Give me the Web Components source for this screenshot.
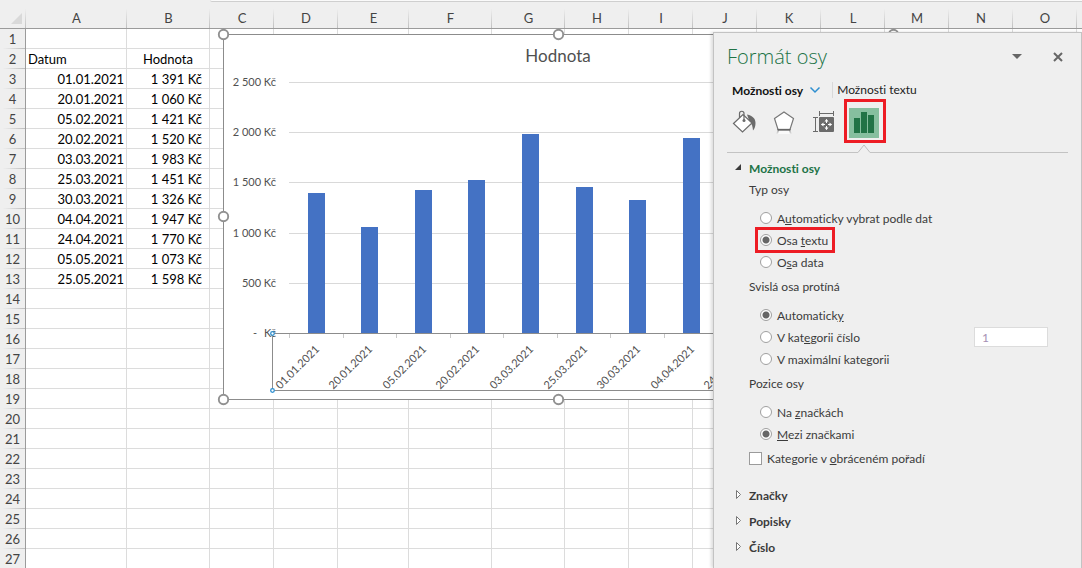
<!DOCTYPE html>
<html lang="cs">
<head>
<meta charset="utf-8">
<title>Formát osy</title>
<style>
html, body { height: 100%; margin: 0; }
body { overflow: hidden; background: #fff; font-family: Lato, "Liberation Sans", sans-serif; font-variant-ligatures: none; }
</style>
</head>
<body>
<excel-window></excel-window>

<template id="t-window">
<style>
:host { display: grid; height: 100%; grid-template: 32px minmax(0, 1fr) / minmax(0, 1fr) 369px; overflow: hidden; }
sheet-grid { grid-area: 1 / 1 / 3 / 3; }
format-pane { grid-area: 2 / 2; z-index: 2; }
</style>
<sheet-grid><axis-chart></axis-chart></sheet-grid>
<format-pane></format-pane>
</template>

<template id="t-sheet">
<style>
:host { display: block; position: relative; overflow: hidden; background: #fff; }
.top { background: #efefef; }
.bar { height: 1px; margin-left: 210px; background: #fafafa; border-bottom: 1px solid #cfcfcf; border-bottom-left-radius: 3px; }
table { border-spacing: 0; table-layout: fixed; background: #fff; font-size: 13px; line-height: 18px; color: #000; }
th, td { box-sizing: border-box; padding: 0; height: 20px; white-space: nowrap; border-bottom: 1px solid #dcdcdc; border-right: 1px solid #dcdcdc; }
th { font-weight: 400; color: #444; text-align: center; }
thead th { height: 27px; padding-top: 6px; border-right: 0; border-bottom-color: #9b9b9b;
  background: linear-gradient(#efefef 25%, #c0c0c0) right / 1px 100% no-repeat #efefef; }
tbody th { border-right-color: #9b9b9b; border-bottom: 0;
  background: linear-gradient(90deg, #efefef 10%, #bdbdbd) bottom / 100% 1px no-repeat #efefef; }
thead svg { display: block; margin-left: 11px; }
td.date { text-align: right; padding-right: 2px; }
td.sum { text-align: right; padding-right: 7px; }
td.left { padding-left: 2px; }
td.mid { text-align: center; }
.float { position: absolute; left: 217px; top: 28px; }
</style>
<div class="top"><div class="bar"></div></div>
<table><colgroup></colgroup><thead></thead><tbody></tbody></table>
<div class="float"><slot></slot></div>
</template>

<template id="t-chart">
<style>
:host { display: block; }
svg { display: block; font-family: Lato, "Liberation Sans", sans-serif; font-size: 11px; fill: #505050; }
.title { font-size: 17px; }
</style>
<svg width="684" height="378" viewBox="217 28 684 378" role="img" aria-label="Hodnota"></svg>
</template>

<template id="t-section">
<style>
:host { display: block; }
button { display: flex; align-items: center; width: 100%; height: 26px; padding: 0; border: 0; background: none; font: inherit; font-weight: 700; color: #3b3b3b; text-align: left; }
svg { width: 22px; height: 12px; flex: none; }
:host([open]) button { height: 22px; color: #217346; }
</style>
<button type="button"><svg viewBox="0 0 22 12"></svg><span></span></button>
<slot></slot>
</template>

<template id="t-group">
<style>
:host { display: block; }
fieldset { margin: 0; padding: 0 0 4px; border: 0; min-width: 0; }
legend { padding: 0; height: 22px; line-height: 22px; margin-left: 22px; }
.rows { display: flex; flex-direction: column; gap: 2px; padding: 7px 0 0 31px; }
</style>
<fieldset><legend></legend><div class="rows"><slot></slot></div></fieldset>
</template>

<template id="t-pane">
<style>
:host { display: block; box-sizing: border-box; background: #efefef; border: 1px solid #c3c3c3; border-bottom: 0; box-shadow: -2px 0 3px #0002; overflow: hidden; font-size: 12px; color: #3b3b3b; }
button { font: inherit; color: inherit; background: none; border: 0; padding: 0; }
header { display: flex; align-items: center; height: 48px; padding: 0 13px; }
h1 { flex: 1; margin: 0; font: 300 20px/28px "Open Sans", sans-serif; color: #217346; }
header button { width: 20px; height: 20px; margin-left: 21px; display: grid; place-items: center; }
svg { display: block; }
.tabs { display: flex; align-items: center; height: 18px; padding-left: 18px; color: #222; }
.tabs .on { display: flex; align-items: center; gap: 6px; font-weight: 700; color: #111; }
.tabs .other { margin-left: 11px; padding-left: 4px; line-height: 16px; border-left: 1px solid #d9d9d9; }
nav { display: flex; height: 44px; padding-left: 10px; }
nav button { width: 40px; display: grid; place-items: center; padding-top: 2px; }
nav .picked { width: 42px; box-sizing: border-box; border: 3px solid #ed1c24; padding: 4px 2px 0 0; }
.rule { display: flex; height: 10px; padding: 0 13px; align-items: flex-end; }
.rule i { height: 1px; background: #c3c3c3; width: 131px; }
.rule i:last-child { width: auto; flex: 1; }
.body { padding: 4px 33px 0 13px; }
label { display: flex; align-items: center; width: fit-content; height: 20px; padding: 0 4px 0 2px; gap: 5px; }
.mark { outline: 3px solid #ed1c24; }
input[type=radio] { appearance: none; box-sizing: border-box; flex: none; width: 12px; height: 12px; margin: 0; border: 1px solid #a0a0a0; border-radius: 50%; background: #fff; }
input[type=radio]:checked { background: radial-gradient(circle, #666 0 3px, #fff 4px); }
input[type=checkbox] { appearance: none; box-sizing: border-box; flex: none; width: 13px; height: 13px; margin: 0; border: 1px solid #9b9b9b; background: #fff; }
.check { margin: 0 0 14px 20px; }
.pair { display: flex; justify-content: space-between; align-items: center; height: 20px; }
.pair input[type=text] { box-sizing: border-box; width: 74px; height: 20px; padding: 0 7px; border: 1px solid #dcdcdc; background: #fff; font: inherit; color: #a690b4; }
</style>
<header>
  <h1>Formát osy</h1>
  <button type="button" aria-label="Možnosti podokna"><svg width="10" height="6"><path d="M0 0h10L5 5z" fill="#666"/></svg></button>
  <button type="button" aria-label="Zavřít"><svg width="10" height="10"><path d="M1 1l8 8M9 1l-8 8" stroke="#666" stroke-width="2"/></svg></button>
</header>
<div class="tabs">
  <button type="button" class="on">Možnosti osy<svg width="12" height="8"><path d="M1.500 1.500l4.500 4.500 4.500-4.500" fill="none" stroke="#2e8fd0" stroke-width="1.500"/></svg></button>
  <button type="button" class="other">Možnosti textu</button>
</div>
<nav>
  <button type="button" aria-label="Výplň a čára"><svg width="26" height="26" viewBox="0 0 26 26"><path d="M16 5.500c6 1.500 8.500 4 8.500 8.500 0 3-.8 5.500-2.500 7.500-.3-4-1-7-3.500-9z" fill="#6b6b6b"/><path d="M2.500 14.500L12 5.500l9 8.500-9.500 9z" fill="#fff" stroke="#6b6b6b" stroke-width="1.200"/><path d="M8.500 9V4.500a2 2 0 0 1 4.500 0V11" fill="none" stroke="#6b6b6b" stroke-width="1.200"/><circle cx="13" cy="11.500" r="1.500" fill="#6b6b6b"/></svg></button>
  <button type="button" aria-label="Efekty"><svg width="26" height="26" viewBox="0 0 26 26"><defs><linearGradient id="g" x2="0" y2="1"><stop stop-color="#999"/><stop offset="1" stop-color="#efefef"/></linearGradient></defs><path d="M7 21h12l2 4H5z" fill="url(#g)"/><path d="M8 21.500h10l1 3.500H7z" fill="#fafafa"/><path d="M13 3l9.500 6.500L19 20.500H7L3.500 9.500z" fill="#fff" stroke="#777" stroke-width="1.200"/><path d="M6.500 20.700h13" stroke="#666" stroke-width="1.700"/></svg></button>
  <button type="button" aria-label="Velikost a vlastnosti"><svg width="26" height="26" viewBox="0 0 26 26"><rect x="8" y="8" width="15" height="15" rx="1" fill="#6b6b6b"/><path d="M8.500 2v5M22.500 2v5M8.500 4.500h14M2 8.500h5M2 22.500h5M4.500 8.500v14" fill="none" stroke="#6b6b6b"/><path d="M15.500 10.500v3.500M15.500 17v3.500M10.500 15.500h3.500M17 15.500h3.500" stroke="#fff"/><path d="M13.500 12.500l2-2.500 2 2.500zM13.500 18.500l2 2.500 2-2.500zM12.500 13.500l-2.500 2 2.500 2zM18.500 13.500l2.500 2-2.500 2z" fill="#fff"/></svg></button>
  <button type="button" class="picked" aria-label="Možnosti osy"><svg width="30" height="30"><path d="M0 0h30v30H0z" fill="#86bf9f"/><path d="M5 10h6v15H5zM12 4h6v21h-6zM19 7h6v18h-6z" fill="#217346"/></svg></button>
</nav>
<div class="rule"><i></i><svg width="12" height="9"><path d="M0 8.500L6 1l6 7.500" fill="none" stroke="#bdbdbd"/></svg><i></i></div>
<div class="body">
  <pane-section heading="Možnosti osy" open>
    <option-group heading="Typ osy">
      <label><input type="radio" name="typ"><span>A<u>u</u>tomaticky vybrat podle dat</span></label>
      <label class="mark"><input type="radio" name="typ" checked><span>Osa <u>t</u>extu</span></label>
      <label><input type="radio" name="typ"><span>O<u>s</u>a data</span></label>
    </option-group>
    <option-group heading="Svislá osa protíná">
      <label><input type="radio" name="cross" checked><span>Automatick<u>y</u></span></label>
      <div class="pair"><label><input type="radio" name="cross"><span>V kat<u>e</u>gorii číslo</span></label><input type="text" value="1" disabled aria-label="V kategorii číslo"></div>
      <label><input type="radio" name="cross"><span>V maximální kate<u>g</u>orii</span></label>
    </option-group>
    <option-group heading="Pozice osy">
      <label><input type="radio" name="pos"><span>Na <u>z</u>načkách</span></label>
      <label><input type="radio" name="pos" checked><span><u>M</u>ezi značkami</span></label>
    </option-group>
    <label class="check"><input type="checkbox"><span>Kategorie v <u>o</u>bráceném pořadí</span></label>
  </pane-section>
  <pane-section heading="Značky"></pane-section>
  <pane-section heading="Popisky"></pane-section>
  <pane-section heading="Číslo"></pane-section>
</div>
</template>

<script>
const DATA = [["01.01.2021", 1391], ["20.01.2021", 1060], ["05.02.2021", 1421], ["20.02.2021", 1520],
  ["03.03.2021", 1983], ["25.03.2021", 1451], ["30.03.2021", 1326], ["04.04.2021", 1947],
  ["24.04.2021", 1770], ["05.05.2021", 1073], ["25.05.2021", 1598]];
const money = n => String(n).replace(/(\d)(\d{3})$/, "$1 $2") + " Kč";

class Base extends HTMLElement {
  constructor() {
    super();
    this.attachShadow({ mode: "open" }).append(document.getElementById(this.constructor.tpl).content.cloneNode(true));
  }
  $(s) { return this.shadowRoot.querySelector(s); }
}

class SheetGrid extends Base {
  static tpl = "t-sheet";
  connectedCallback() {
    const widths = [26, 101, 83, 64, 64, 71, 83, 73, 64, 64, 64, 64, 64, 64, 64, 64, 64];
    const letters = "ABCDEFGHIJKLMNO";
    this.$("table").style.width = widths.reduce((a, b) => a + b) + "px";
    this.$("colgroup").innerHTML = widths.map(w => `<col style="width:${w}px">`).join("");
    this.$("thead").innerHTML = `<tr><th><svg width="11" height="11"><path d="M11 0v11H0z" fill="#d9d9d9"/></svg></th>` +
      [...letters].map(l => `<th scope="col">${l}</th>`).join("") + "<th></th></tr>";
    let rows = "";
    for (let r = 1; r <= 27; r++) {
      const d = DATA[r - 3];
      const ab = r === 2 ? '<td class="left">Datum</td><td class="mid">Hodnota</td>'
        : d ? `<td class="date">${d[0]}</td><td class="sum">${money(d[1])}</td>` : "<td></td><td></td>";
      rows += `<tr><th scope="row">${r}</th>${ab}${"<td></td>".repeat(14)}</tr>`;
    }
    this.$("tbody").innerHTML = rows;
  }
}

class AxisChart extends Base {
  static tpl = "t-chart";
  connectedCallback() {
    const left = 289, right = 878, base = 333, top = 82, step = (right - left) / DATA.length;
    const y = v => Math.round(base - v * (base - top) / 2500);
    let s = '<rect x="223.5" y="34.5" width="670" height="365" fill="#fff" stroke="#8c8c8c"/>';
    s += '<text class="title" x="558" y="62" text-anchor="middle">Hodnota</text>';
    for (let v = 0; v <= 2500; v += 500) {
      if (v) s += `<path d="M${left} ${y(v) + .5}H${right}" stroke="#d9d9d9"/>`;
      s += v ? `<text x="276" y="${y(v) + 4}" text-anchor="end">${money(v)}</text>`
        : `<text x="253" y="${y(v) + 4}">-</text><text x="276" y="${y(v) + 4}" text-anchor="end">Kč</text>`;
    }
    DATA.forEach(([date, v], i) => {
      const c = left + step * (i + .5), t = Math.round(left + step * i) + .5;
      s += `<rect x="${Math.round(c - 8)}" y="${y(v)}" width="17" height="${base - y(v)}" fill="#4472c4"/>`;
      s += `<path d="M${t} ${base}v5" stroke="#c8c8c8"/>`;
      s += `<text transform="translate(${Math.round(c + 4)} 350) rotate(-45)" text-anchor="end">${date}</text>`;
    });
    s += '<path d="M884 333.500H272.500V390.500H884" fill="none" stroke="#8c8c8c"/>';
    for (const cy of [333.5, 390.5]) s += `<circle cx="272.5" cy="${cy}" r="1.800" fill="#fff" stroke="#2e8fd0" stroke-width="1.300"/>`;
    for (const [cx, cy] of [[223.5, 34.5], [558.5, 34.5], [893.5, 34.5], [223.5, 216.5], [893.5, 216.5], [223.5, 399.5], [558.5, 399.5], [893.5, 399.5]])
      s += `<circle cx="${cx}" cy="${cy}" r="4.700" fill="#fff" stroke="#919191" stroke-width="1.900"/>`;
    this.$("svg").innerHTML = s;
  }
}

class PaneSection extends Base {
  static tpl = "t-section";
  connectedCallback() {
    const open = this.hasAttribute("open");
    this.$("span").textContent = this.getAttribute("heading");
    this.$("button").setAttribute("aria-expanded", open);
    this.$("svg").innerHTML = open ? '<path d="M14 2v6H8z" fill="#3b3b3b"/>'
      : '<path d="M9.500 1.500v8l4-4z" fill="#fff" stroke="#777"/>';
  }
}

class OptionGroup extends Base {
  static tpl = "t-group";
  connectedCallback() { this.$("legend").textContent = this.getAttribute("heading"); }
}
class FormatPane extends Base { static tpl = "t-pane"; }
class ExcelWindow extends Base { static tpl = "t-window"; }

customElements.define("sheet-grid", SheetGrid);
customElements.define("axis-chart", AxisChart);
customElements.define("pane-section", PaneSection);
customElements.define("option-group", OptionGroup);
customElements.define("format-pane", FormatPane);
customElements.define("excel-window", ExcelWindow);
</script>
</body>
</html>
